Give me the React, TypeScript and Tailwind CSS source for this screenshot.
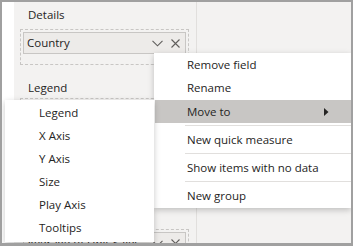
import React from "react";

const Chevron = () => (
  <svg width="11" height="7" viewBox="0 0 11 7" className="shrink-0">
    <polyline points="0.5,0.8 5.5,5.8 10.5,0.8" fill="none" stroke="#605e5c" strokeWidth="1.1" />
  </svg>
);

const Close = () => (
  <svg width="9" height="9" viewBox="0 0 9 9" className="shrink-0">
    <path d="M0.5 0.5 L8.5 8.5 M8.5 0.5 L0.5 8.5" stroke="#605e5c" strokeWidth="1.1" fill="none" />
  </svg>
);

const Field = ({ name }: { name: string }) => (
  <div className="h-[22px] bg-[#edebe9] border border-[#c8c6c4] flex items-center pl-[3px] pr-[5px]">
    <span className="flex-1 truncate">{name}</span>
    <div className="flex items-center gap-[8px]">
      <Chevron />
      <Close />
    </div>
  </div>
);

const Well = ({ children, className }: { children?: React.ReactNode; className?: string }) => (
  <div className={"ml-[6px] w-[169px] border border-dashed border-[#c8c6c4] pt-[2px] px-[2px] " + (className ?? "")}>
    {children}
  </div>
);

const menuItems = ["Remove field", "Rename", "Move to"];
const menuRest = ["New quick measure", "Show items with no data", "New group"];
const subItems = ["Legend", "X Axis", "Y Axis", "Size", "Play Axis", "Tooltips"];

export default function App() {
  return (
    <div className="relative w-[353px] h-[246px] overflow-hidden border-t-2 border-x-2 border-b-[3px] border-[#a0a0a0] bg-white font-['Open_Sans',sans-serif] text-[11.5px] text-[#252423]">
      <div className="flex h-full">
        <div className="w-[12px] bg-white" />
        <div className="w-[183px] bg-[#f3f2f1] border-r border-[#e1dfdd]">
          <div className="mt-[5px] pl-[14px] leading-[16px]">Details</div>
          <Well className="mt-[6px] h-[36px]">
            <Field name="Country" />
          </Well>
          <div className="mt-[15px] pl-[14px] leading-[16px]">Legend</div>
          <Well className="mt-[2px] h-[36px]" />
          <div className="mt-[15px] h-[16px]" />
          <Well className="mt-[2px] h-[36px]" />
          <div className="mt-[8px] h-[16px]" />
          <Well className="mt-[2px] h-[36px]">
            <Field name="Average of Unit Sales" />
          </Well>
        </div>
        <div className="flex-1 bg-[#f3f2f1]" />
      </div>

      {/* context menu */}
      <div className="absolute left-[152px] top-[51px] w-[197px] h-[155px] bg-white shadow-[0_2px_6px_rgba(0,0,0,0.22)]">
        {menuItems.map((m) => (
          <div
            key={m}
            className={
              "flex items-center pl-[33px] pr-[22px] " +
              (m === "Move to" ? "h-[23px] mt-[1px] bg-[#c8c6c4] ml-[1px]" : "h-[23px]")
            }
          >
            <span className={"flex-1 " + (m === "Move to" ? "-ml-[1px] pt-[1px]" : "")}>{m}</span>
            {m === "Move to" && (
              <svg width="5" height="8" viewBox="0 0 5 8">
                <polygon points="0,0 4.5,4 0,8" fill="#252423" />
              </svg>
            )}
          </div>
        ))}
        {menuRest.map((m) => (
          <div key={m}>
            <div className="ml-[31px] my-[2px] h-px bg-[#e1dfdd]" />
            <div className="h-[23px] flex items-center pl-[33px]">{m}</div>
          </div>
        ))}
      </div>

      {/* submenu */}
      <div className="absolute left-[3px] top-[98px] w-[149px] h-[142px] bg-white pt-[1px] shadow-[0_2px_6px_rgba(0,0,0,0.22)]">
        {subItems.map((s) => (
          <div key={s} className="h-[23px] flex items-center pl-[34px]">
            {s}
          </div>
        ))}
      </div>
    </div>
  );
}
